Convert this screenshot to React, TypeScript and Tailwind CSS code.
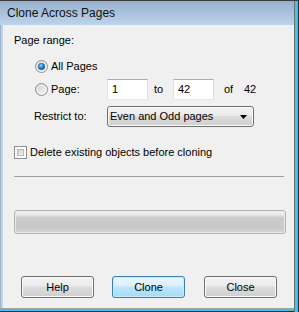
import React from "react";

const font = { fontFamily: '"Liberation Sans", Arial, sans-serif' };

function Radio({ checked }: { checked?: boolean }) {
  return (
    <svg width="13" height="13" viewBox="0 0 13 13" className="shrink-0">
      <defs>
        <linearGradient id="rb" x1="0" y1="0" x2="1" y2="1">
          <stop offset="0" stopColor="#cfcfcf" />
          <stop offset="1" stopColor="#f6f6f6" />
        </linearGradient>
        <radialGradient id="rd" cx="0.4" cy="0.35" r="0.7">
          <stop offset="0" stopColor="#8fd3ff" />
          <stop offset="0.5" stopColor="#2a8ad4" />
          <stop offset="1" stopColor="#0b4e8e" />
        </radialGradient>
      </defs>
      <circle cx="6.5" cy="6.5" r="6" fill="url(#rb)" stroke="#8e8f8f" strokeWidth="1" />
      <circle cx="6.5" cy="6.5" r="4.5" fill="none" stroke="#ffffff" strokeOpacity="0.6" strokeWidth="1" />
      {checked && <circle cx="6.5" cy="6.5" r="3.3" fill="url(#rd)" stroke="#1f5d96" strokeWidth="0.6" />}
    </svg>
  );
}

function Btn({ label, primary, ml }: { label: string; primary?: boolean; ml: string }) {
  return (
    <div
      className={
        "w-[73px] h-[22px] rounded-[3px] border flex items-center justify-center text-[11px] text-black " +
        ml +
        " " +
        (primary
          ? "border-[#3c7fb1] bg-[linear-gradient(#eaf6fd_0%,#d9f0fc_45%,#bee6fd_50%,#a7d9f5_100%)] shadow-[inset_0_0_0_1px_#c8ecfc]"
          : "border-[#707070] bg-[linear-gradient(#f2f2f2_0%,#ebebeb_45%,#dddddd_50%,#cfcfcf_100%)] shadow-[inset_0_0_0_1px_#fbfbfb]")
      }
    >
      {label}
    </div>
  );
}

function TextBox({ value }: { value: string }) {
  return (
    <div className="w-[41px] h-[21px] bg-white border border-[#abadb3] border-l-[#e2e3ea] border-r-[#dbdfe6] border-b-[#e3e9ef] flex items-center pl-[4px] text-[11px] text-black">
      {value}
    </div>
  );
}

export default function App() {
  return (
    <div className="w-[299px] h-[312px] flex flex-row bg-[#b9d1ea]" style={font}>
      <div className="flex-1 flex flex-col border-t border-[#3a3a3a]">
        <div className="h-[24px] bg-[linear-gradient(#97b1cd,#bcd3eb)] flex items-center pl-[7px] text-[12px] text-[#111]">
          Clone Across Pages
        </div>
        <div className="flex-1 flex flex-row">
          <div className="w-[3px] bg-[linear-gradient(90deg,#9eb2c8_0px,#9eb2c8_1px,#bcd3eb_1px)]" />
          <div className="flex-1 bg-[#f0f0f0] flex flex-col text-[11px] text-black">
            <div className="mt-[8px] h-[14px] leading-[14px] pl-[11px]">Page range:</div>
            <div className="mt-[12px] h-[14px] flex items-center pl-[32px]">
              <Radio checked />
              <span className="ml-[3px] leading-[14px]">All Pages</span>
            </div>
            <div className="mt-[6px] h-[21px] flex items-center pl-[32px]">
              <Radio />
              <span className="ml-[3px] w-[56px]">Page:</span>
              <TextBox value="1" />
              <span className="ml-[6px] w-[19px]">to</span>
              <TextBox value="42" />
              <span className="ml-[10px] w-[20px]">of</span>
              <span>42</span>
            </div>
            <div className="mt-[6px] h-[21px] flex items-center pl-[31px]">
              <span className="w-[73px]">Restrict to:</span>
              <div className="w-[147px] h-[21px] rounded-[3px] border border-[#707070] bg-[linear-gradient(#f2f2f2_0%,#ebebeb_45%,#dddddd_50%,#cfcfcf_100%)] shadow-[inset_0_0_0_1px_#fbfbfb] flex items-center pl-[2px] pr-[6px]">
                <span className="flex-1">Even and Odd pages</span>
                <svg width="7" height="4" viewBox="0 0 7 4">
                  <path d="M0 0 H7 L3.5 4 Z" fill="#000" />
                </svg>
              </div>
            </div>
            <div className="mt-[19px] h-[13px] flex items-center pl-[11px]">
              <div className="w-[13px] h-[13px] border border-[#8e8f8f] bg-white p-[2px] shrink-0">
                <div className="w-full h-full bg-[linear-gradient(135deg,#cbcbcb,#f4f4f4)] border border-[#b9b9b9]" />
              </div>
              <span className="ml-[3px]">Delete existing objects before cloning</span>
            </div>
            <div className="mt-[17px] ml-[11px] w-[270px] h-[1px] bg-[#a0a0a0]" />
            <div className="mt-[33px] ml-[11px] w-[272px] h-[24px] rounded-[3px] border border-[#b2b2b2] bg-[linear-gradient(#f6f6f6_0%,#e4e4e4_20%,#cbcbcb_30%,#c8c8c8_75%,#d6d6d6_100%)] shadow-[inset_0_0_0_1px_#e8e8e8]" />
            <div className="mt-[42px] flex flex-row">
              <Btn label="Help" ml="ml-[18px]" />
              <Btn label="Clone" primary ml="ml-[18px]" />
              <Btn label="Close" ml="ml-[19px]" />
            </div>
          </div>
        </div>
        <div className="h-[4px] flex flex-col">
          <div className="h-[1px] bg-[#a0a0a0]" />
          <div className="h-[2px] bg-[#3cc4f0]" />
          <div className="h-[1px] bg-[#2a2a2a]" />
        </div>
      </div>
      <div className="w-[5px] flex flex-row border-t border-[#3a3a3a]">
        <div className="w-[1px] bg-[#707070]" />
        <div className="w-[3px] bg-[#3cc4f0]" />
        <div className="w-[1px] bg-[#2a2a2a]" />
      </div>
    </div>
  );
}
